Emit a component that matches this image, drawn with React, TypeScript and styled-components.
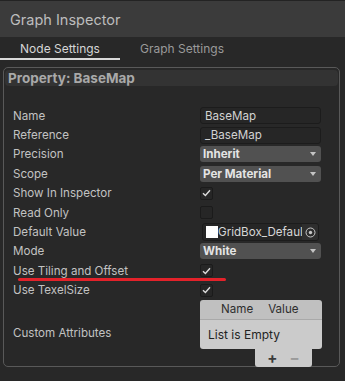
import React from "react"
import styled, { createGlobalStyle } from "styled-components"

const GlobalStyle = createGlobalStyle`
  html, body {
    margin: 0;
    padding: 0;
    background: #282828;
  }
  body {
    width: 345px;
    height: 381px;
    overflow: hidden;
    font-family: Inter, "Noto Sans", sans-serif;
  }
`

type Row =
  | { label: string; kind: "text"; value: string }
  | { label: string; kind: "dropdown"; value: string }
  | { label: string; kind: "check"; checked: boolean; mark?: boolean }
  | { label: string; kind: "object"; value: string }

const rows: Row[] = [
  { label: "Name", kind: "text", value: "BaseMap" },
  { label: "Reference", kind: "text", value: "_BaseMap" },
  { label: "Precision", kind: "dropdown", value: "Inherit" },
  { label: "Scope", kind: "dropdown", value: "Per Material" },
  { label: "Show In Inspector", kind: "check", checked: true },
  { label: "Read Only", kind: "check", checked: false },
  { label: "Default Value", kind: "object", value: "GridBox_Default" },
  { label: "Mode", kind: "dropdown", value: "White" },
  { label: "Use Tiling and Offset", kind: "check", checked: true, mark: true },
  { label: "Use TexelSize", kind: "check", checked: true },
]

const App: React.FC = () => {
  return (
    <>
      <GlobalStyle />
      <Window>
        <TitleBar>Graph Inspector</TitleBar>
        <Tabs>
          <Tab active>Node Settings</Tab>
          <Tab>Graph Settings</Tab>
        </Tabs>
        <Panel>
          <PanelHeader>Property: BaseMap</PanelHeader>
          <Fields>
            {rows.map((row) => (
              <FieldRow key={row.label}>
                <Label>{row.label}</Label>
                {row.kind === "text" && <TextField>{row.value}</TextField>}
                {row.kind === "dropdown" && (
                  <Dropdown>
                    <span>{row.value}</span>
                    <Arrow />
                  </Dropdown>
                )}
                {row.kind === "check" && (
                  <Checkbox>
                    {row.checked && (
                      <svg width="9" height="8" viewBox="0 0 9 8">
                        <path
                          d="M1 4.2 L3.4 6.5 L8 1.3"
                          fill="none"
                          stroke="#dcdcdc"
                          strokeWidth="1.4"
                        />
                      </svg>
                    )}
                  </Checkbox>
                )}
                {row.kind === "object" && (
                  <ObjectField>
                    <Swatch />
                    <ObjectName>{row.value}</ObjectName>
                    <Picker>
                      <svg width="11" height="11" viewBox="0 0 11 11">
                        <circle cx="5.5" cy="5.5" r="4.5" fill="none" stroke="#c8c8c8" strokeWidth="1" />
                        <circle cx="5.5" cy="5.5" r="1.7" fill="#c8c8c8" />
                      </svg>
                    </Picker>
                  </ObjectField>
                )}
                {row.kind === "check" && row.mark && <RedMark />}
              </FieldRow>
            ))}
          </Fields>
          <AttrRow>
            <Label>Custom Attributes</Label>
            <ListBox>
              <ListHead>
                <span>Name</span>
                <span>Value</span>
              </ListHead>
              <ListBody>List is Empty</ListBody>
              <ListFooter>
                <FooterBtn>+</FooterBtn>
                <FooterBtn dim>−</FooterBtn>
              </ListFooter>
            </ListBox>
          </AttrRow>
        </Panel>
      </Window>
    </>
  )
}

const Window = styled.div`
  width: 345px;
  height: 381px;
  display: flex;
  flex-direction: column;
  background: #282828;
`

const TitleBar = styled.div`
  height: 36px;
  border-top: 1px solid #232323;
  background: #3b3b3b;
  color: #bdbdbd;
  font-size: 14.5px;
  padding-left: 10px;
  display: flex;
  align-items: center;
`

const Tabs = styled.div`
  display: flex;
  height: 23px;
  background: #282828;
`

const Tab = styled.div<{ active?: boolean }>`
  width: 120px;
  box-sizing: border-box;
  display: flex;
  justify-content: center;
  align-items: center;
  font-size: 12px;
  color: ${({ active }) => (active ? "#d6d6d6" : "#9a9a9a")};
  border-bottom: 2px solid ${({ active }) => (active ? "#dadada" : "transparent")};
  padding-top: 1px;
  & + & {
    margin-left: 2px;
  }
`

const Panel = styled.div`
  margin: 7px 5px 0 3px;
  height: 300px;
  box-sizing: border-box;
  border: 1px solid #595959;
  border-radius: 5px;
  padding: 1px 1px 0 1px;
  display: flex;
  flex-direction: column;
`

const PanelHeader = styled.div`
  height: 22px;
  margin-top: 1px;
  background: #333333;
  border-radius: 4px;
  padding-left: 3px;
  display: flex;
  align-items: center;
  font-size: 13.5px;
  font-weight: 700;
  color: #a9a9a9;
`

const Fields = styled.div`
  display: flex;
  flex-direction: column;
  padding: 20px 0 0 8px;
`

const FieldRow = styled.div`
  position: relative;
  display: grid;
  grid-template-columns: 187px auto;
  align-items: center;
  height: 19.4px;
`

const Label = styled.div`
  font-size: 11.6px;
  color: #c2c2c2;
  white-space: nowrap;
`

const TextField = styled.div`
  width: 121px;
  height: 17px;
  box-sizing: border-box;
  background: #262626;
  border: 1px solid #1c1c1c;
  border-radius: 3px;
  padding-left: 4px;
  font-size: 11.6px;
  color: #d2d2d2;
  display: flex;
  align-items: center;
`

const Dropdown = styled.div`
  width: 121px;
  height: 16px;
  box-sizing: border-box;
  background: #515151;
  border-radius: 3px;
  padding: 0 5px 0 3px;
  display: flex;
  justify-content: space-between;
  align-items: center;
  font-size: 11.6px;
  font-weight: 700;
  color: #e4e4e4;
`

const Arrow = styled.div`
  width: 0;
  height: 0;
  border-left: 3.5px solid transparent;
  border-right: 3.5px solid transparent;
  border-top: 4px solid #c4c4c4;
`

const Checkbox = styled.div`
  width: 13px;
  height: 13px;
  box-sizing: border-box;
  background: #262626;
  border: 1px solid #1b1b1b;
  border-radius: 2px;
  display: flex;
  align-items: center;
  justify-content: center;
`

const ObjectField = styled.div`
  width: 117px;
  height: 18px;
  margin-left: 2px;
  box-sizing: border-box;
  background: #262626;
  border: 1px solid #1c1c1c;
  border-radius: 3px;
  display: flex;
  align-items: center;
  overflow: hidden;
`

const Swatch = styled.div`
  width: 12px;
  height: 12px;
  flex: none;
  margin-left: 3px;
  background: #ffffff;
`

const ObjectName = styled.div`
  flex: 1;
  min-width: 0;
  overflow: hidden;
  white-space: nowrap;
  font-size: 11.6px;
  color: #d6d6d6;
`

const Picker = styled.div`
  width: 16px;
  height: 100%;
  flex: none;
  background: #2e2e2e;
  display: flex;
  align-items: center;
  justify-content: center;
`

const RedMark = styled.div`
  position: absolute;
  left: 5px;
  top: 17px;
  width: 208px;
  height: 3px;
  border-radius: 2px;
  background: #e3222a;
`

const AttrRow = styled.div`
  display: grid;
  grid-template-columns: 187px auto;
  align-items: center;
  padding: 0 0 0 8px;
`

const ListBox = styled.div`
  width: 122px;
  display: flex;
  flex-direction: column;
  align-items: flex-end;
`

const ListHead = styled.div`
  width: 100%;
  height: 20px;
  box-sizing: border-box;
  background: #c0c0c0;
  border-radius: 3px 3px 0 0;
  border-bottom: 1px solid #a9a9a9;
  display: flex;
  align-items: center;
  gap: 15px;
  padding-left: 21px;
  font-size: 11.6px;
  color: #2e2e2e;
`

const ListBody = styled.div`
  width: 100%;
  height: 29px;
  box-sizing: border-box;
  background: #cbcbcb;
  border-radius: 0 0 3px 3px;
  padding-left: 8px;
  display: flex;
  align-items: center;
  font-size: 12px;
  color: #232323;
`

const ListFooter = styled.div`
  width: 57px;
  height: 18px;
  margin-right: 10px;
  background: #cbcbcb;
  border-radius: 0 0 3px 3px;
  display: flex;
  justify-content: center;
  gap: 12px;
  align-items: center;
`

const FooterBtn = styled.span<{ dim?: boolean }>`
  font-size: 15px;
  font-weight: 700;
  color: ${({ dim }) => (dim ? "#9a9a9a" : "#3a3a3a")};
  line-height: 1;
`

export default App
